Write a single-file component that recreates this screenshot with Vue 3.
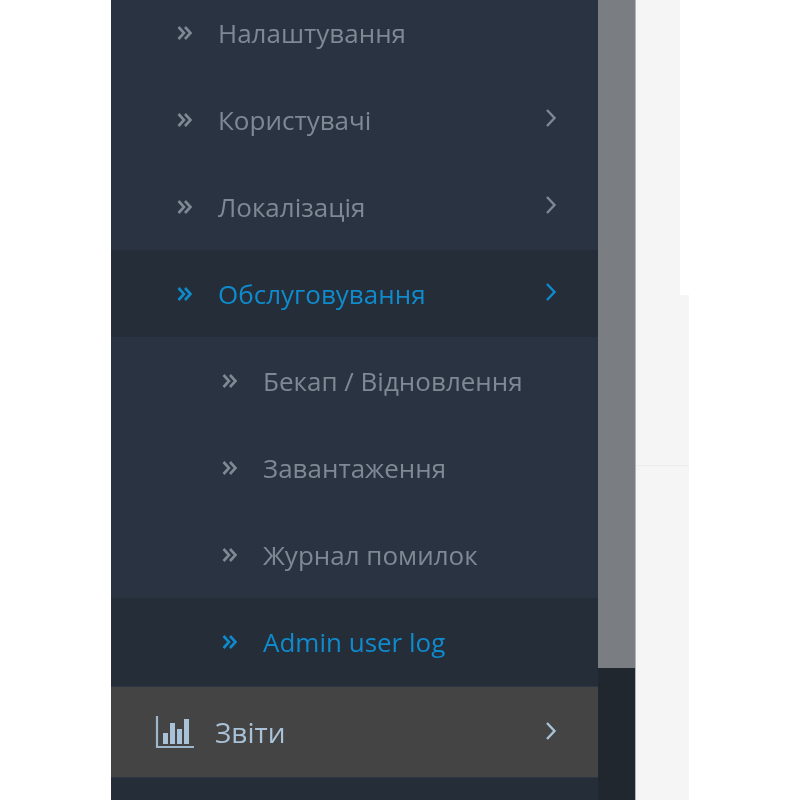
<template>
  <div class="page">
    <aside class="sidebar">
      <ul class="menu">
        <li v-for="item in items" :key="item.label" class="row" :class="[item.cls]">
          <svg v-if="item.cls === 'report'" class="chart" viewBox="0 0 40 34" width="40" height="34">
            <path d="M2 1V32H39" fill="none" stroke="#9db6cb" stroke-width="2.2" />
            <rect x="8" y="18" width="5" height="11" fill="#a9c2d8" />
            <rect x="15" y="8" width="5" height="21" fill="#a9c2d8" />
            <rect x="22" y="14" width="5" height="15" fill="#a9c2d8" />
            <rect x="29" y="4" width="5" height="25" fill="#a9c2d8" />
          </svg>
          <svg v-else class="dbl" viewBox="0 0 16 16" width="16" height="16">
            <path d="M1.5 2 7 8l-5.5 6M8 2l5.5 6L8 14" fill="none" stroke="currentColor" stroke-width="2.6" />
          </svg>
          <span class="label">{{ item.label }}</span>
          <svg v-if="item.arrow" class="arrow" viewBox="0 0 12 20" width="12" height="20">
            <path d="M2 2l7.5 8L2 18" fill="none" stroke="currentColor" stroke-width="2.4" />
          </svg>
        </li>
      </ul>
    </aside>
    <div class="scrollbar"><div class="thumb"></div></div>
    <main class="content">
      <div class="panel"></div>
      <div class="rule"></div>
    </main>
  </div>
</template>

<script setup>
const items = [
  { label: 'Налаштування', cls: 'top', arrow: false },
  { label: 'Користувачі', cls: '', arrow: true },
  { label: 'Локалізація', cls: '', arrow: true },
  { label: 'Обслуговування', cls: 'active', arrow: true },
  { label: 'Бекап / Відновлення', cls: 'sub', arrow: false },
  { label: 'Завантаження', cls: 'sub', arrow: false },
  { label: 'Журнал помилок', cls: 'sub', arrow: false },
  { label: 'Admin user log', cls: 'sub active', arrow: false },
  { label: 'Звіти', cls: 'report', arrow: true }
]
</script>

<style>
html, body { margin: 0; background: #fff; }
</style>

<style scoped>
.page {
  display: flex;
  width: 800px;
  height: 800px;
  overflow: hidden;
  padding-left: 111px;
  box-sizing: border-box;
  font-family: "Open Sans", sans-serif;
}
.sidebar {
  width: 487px;
  background: #252d39;
  flex: none;
}
.menu {
  list-style: none;
  margin: -11px 0 0;
  padding: 0;
}
.row {
  display: flex;
  align-items: center;
  height: 87px;
  padding-left: 66px;
  background: #2a3342;
  color: #7f8894;
  font-size: 26px;
  filter: blur(0.4px);
  box-sizing: border-box;
}
.label { margin-left: 25px; }
.row .arrow { margin-left: auto; margin-right: 41px; margin-top: -3px; }
.sub { padding-left: 111px; }
.active { background: #252d38; color: #0f8bcd; }
.report {
  height: 92px;
  padding-left: 44px;
  margin-top: 1px;
  background: #444444;
  color: #a9c2d8;
  border-top: 1px solid #2f3744;
  border-bottom: 1px solid #2f3744;
  font-size: 28px;
}
.report .label { margin-left: 20px; }
.scrollbar {
  width: 37px;
  flex: none;
  background: #20272e;
  border-right: 1px solid #b0b4b8;
}
.thumb { height: 668px; background: #7a7d81; }
.content {
  width: 53px;
  flex: none;
  background: #f5f5f5;
  position: relative;
}
.panel {
  position: absolute;
  top: 0;
  left: 44px;
  width: 9px;
  height: 295px;
  background: #fff;
}
.rule {
  position: absolute;
  top: 465px;
  left: 0;
  width: 100%;
  height: 1px;
  background: #ececec;
}
</style>
